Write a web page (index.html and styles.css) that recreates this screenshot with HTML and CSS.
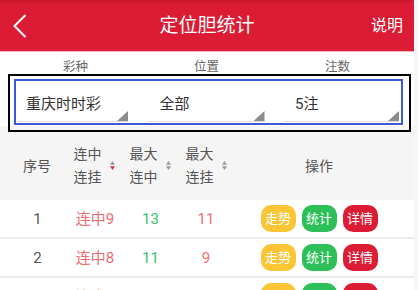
FILE: index.html
```html
<!DOCTYPE html>
<html lang="zh-CN">
<head>
<meta charset="utf-8">
<title>定位胆统计</title>
<link rel="stylesheet" href="styles.css">
</head>
<body>
<div class="page">
  <header class="topbar">
    <div class="back">
      <svg width="14" height="24" viewBox="0 0 14 24"><polyline points="12.5,1 1.5,12 12.5,23" fill="none" stroke="#fff" stroke-width="2"/></svg>
    </div>
    <div class="title">定位胆统计</div>
    <div class="help">说明</div>
  </header>

  <section class="filters">
    <div class="labels">
      <span>彩种</span><span>位置</span><span>注数</span>
    </div>
    <div class="frame">
      <div class="frame-inner">
        <div class="select s1">重庆时时彩</div>
        <div class="select s2">全部</div>
        <div class="select s3">5注</div>
      </div>
    </div>
  </section>

  <div class="thead">
    <div class="c1">序号</div>
    <div class="c2 sortable"><span class="two">连中<br>连挂</span><svg class="sort" width="5" height="9" viewBox="0 0 5 9"><polygon points="0,3.8 2.5,0 5,3.8" fill="#999"/><polygon points="0,5.2 5,5.2 2.5,9" fill="#e8283c"/></svg></div>
    <div class="c3 sortable"><span class="two">最大<br>连中</span><svg class="sort" width="5" height="9" viewBox="0 0 5 9"><polygon points="0,3.8 2.5,0 5,3.8" fill="#999"/><polygon points="0,5.2 5,5.2 2.5,9" fill="#999"/></svg></div>
    <div class="c4 sortable"><span class="two">最大<br>连挂</span><svg class="sort" width="5" height="9" viewBox="0 0 5 9"><polygon points="0,3.8 2.5,0 5,3.8" fill="#999"/><polygon points="0,5.2 5,5.2 2.5,9" fill="#999"/></svg></div>
    <div class="c5">操作</div>
  </div>

  <div class="row">
    <div class="c1 num">1</div>
    <div class="c2 red">连中9</div>
    <div class="c3 green">13</div>
    <div class="c4 red">11</div>
    <div class="c5 ops"><span class="btn yellow">走势</span><span class="btn greenb">统计</span><span class="btn redb">详情</span></div>
  </div>
  <div class="row">
    <div class="c1 num">2</div>
    <div class="c2 red">连中8</div>
    <div class="c3 green">11</div>
    <div class="c4 red">9</div>
    <div class="c5 ops"><span class="btn yellow">走势</span><span class="btn greenb">统计</span><span class="btn redb">详情</span></div>
  </div>
  <div class="row">
    <div class="c1 num">3</div>
    <div class="c2 red">连中7</div>
    <div class="c3 green">10</div>
    <div class="c4 red">8</div>
    <div class="c5 ops"><span class="btn yellow">走势</span><span class="btn greenb">统计</span><span class="btn redb">详情</span></div>
  </div>
</div>
</body>
</html>
```

FILE: styles.css
```css
html {
  background: #f7f7f7;
}
body {
  margin: 0;
  font-family: Roboto, "Noto Sans CJK SC", sans-serif;
  overflow: hidden;
}
.page {
  width: 414px;
  background: #f5f5f5;
}
.topbar {
  height: 51px;
  border-bottom: 1px solid #f2b3bb;
  background: linear-gradient(#c9182e 0, #da1b33 4px, #dc1c34 100%);
  display: grid;
  grid-template-columns: 1fr auto 1fr;
  align-items: center;
  color: #fff;
}
.back {
  padding-left: 13px;
  display: flex;
  align-items: center;
  padding-top: 1px;
}
.back svg {
  display: block;
}
.title {
  font-size: 19px;
  line-height: 24px;
  padding-top: 1px;
}
.help {
  justify-self: end;
  padding-right: 11px;
  font-size: 16px;
  line-height: 22px;
}
.filters {
  height: 80px;
  background: linear-gradient(#fff 0, #fff 74px, #f5f5f5 74px);
}
.labels {
  height: 22px;
  padding-left: 10px;
  display: grid;
  grid-template-columns: 131px 131px 131px;
  justify-items: center;
  font-size: 12.5px;
  line-height: 18px;
  color: #666;
  box-sizing: border-box;
  padding-top: 6px;
}
.frame {
  margin-left: 8px;
  width: 403px;
  box-sizing: border-box;
  border: 2px solid #000;
  padding: 3px 6px 5px 4px;
}
.frame-inner {
  height: 42px;
  border: 2px solid #3b5ad8;
  background: #fff;
  display: grid;
  grid-template-columns: 111px 117px 115px;
  column-gap: 19.5px;
  padding-left: 1px;
  align-items: start;
}
.select {
  position: relative;
  height: 35px;
  padding-top: 5px;
  border-bottom: 1px solid #dedede;
  display: flex;
  align-items: center;
  font-size: 15px;
  color: #333;
  line-height: 20px;
}
.s1 { padding-left: 9px; }
.s2 { padding-left: 12px; }
.s3 { padding-left: 11px; }
.select::after {
  content: "";
  position: absolute;
  right: 0;
  bottom: 0;
  width: 11px;
  height: 10px;
  background: #8c8c8c;
  clip-path: polygon(100% 0, 100% 100%, 0 100%);
}
.thead, .row {
  display: grid;
  grid-template-columns: 66px 56px 56px 56px 170px;
  align-items: center;
  justify-items: center;
}
.thead {
  height: 68px;
  font-size: 14px;
  color: #555;
  line-height: 23px;
}
.c1 {
  padding-left: 8px;
}
.sortable {
  display: flex;
  align-items: center;
  gap: 8px;
}
.two {
  display: block;
  white-space: nowrap;
}
.sort {
  display: block;
  margin-top: -2px;
}
.row {
  height: 37px;
  background: #fff;
  border-bottom: 2px solid #ececec;
  font-size: 15px;
  line-height: 20px;
}
.num {
  color: #555;
  padding-left: 9px;
}
.red {
  color: #ef6b73;
}
.green {
  color: #36c46b;
}
.row .c2 { padding-left: 2px; }
.row .c3 { padding-left: 1px; }
.ops {
  display: flex;
  gap: 6px;
}
.btn {
  display: flex;
  align-items: center;
  justify-content: center;
  width: 35px;
  height: 27px;
  border-radius: 10px;
  font-size: 13px;
  color: #fff;
}
.yellow { background: #fbc636; }
.greenb { background: #2dbf58; }
.redb { background: #dc1c34; }
```
